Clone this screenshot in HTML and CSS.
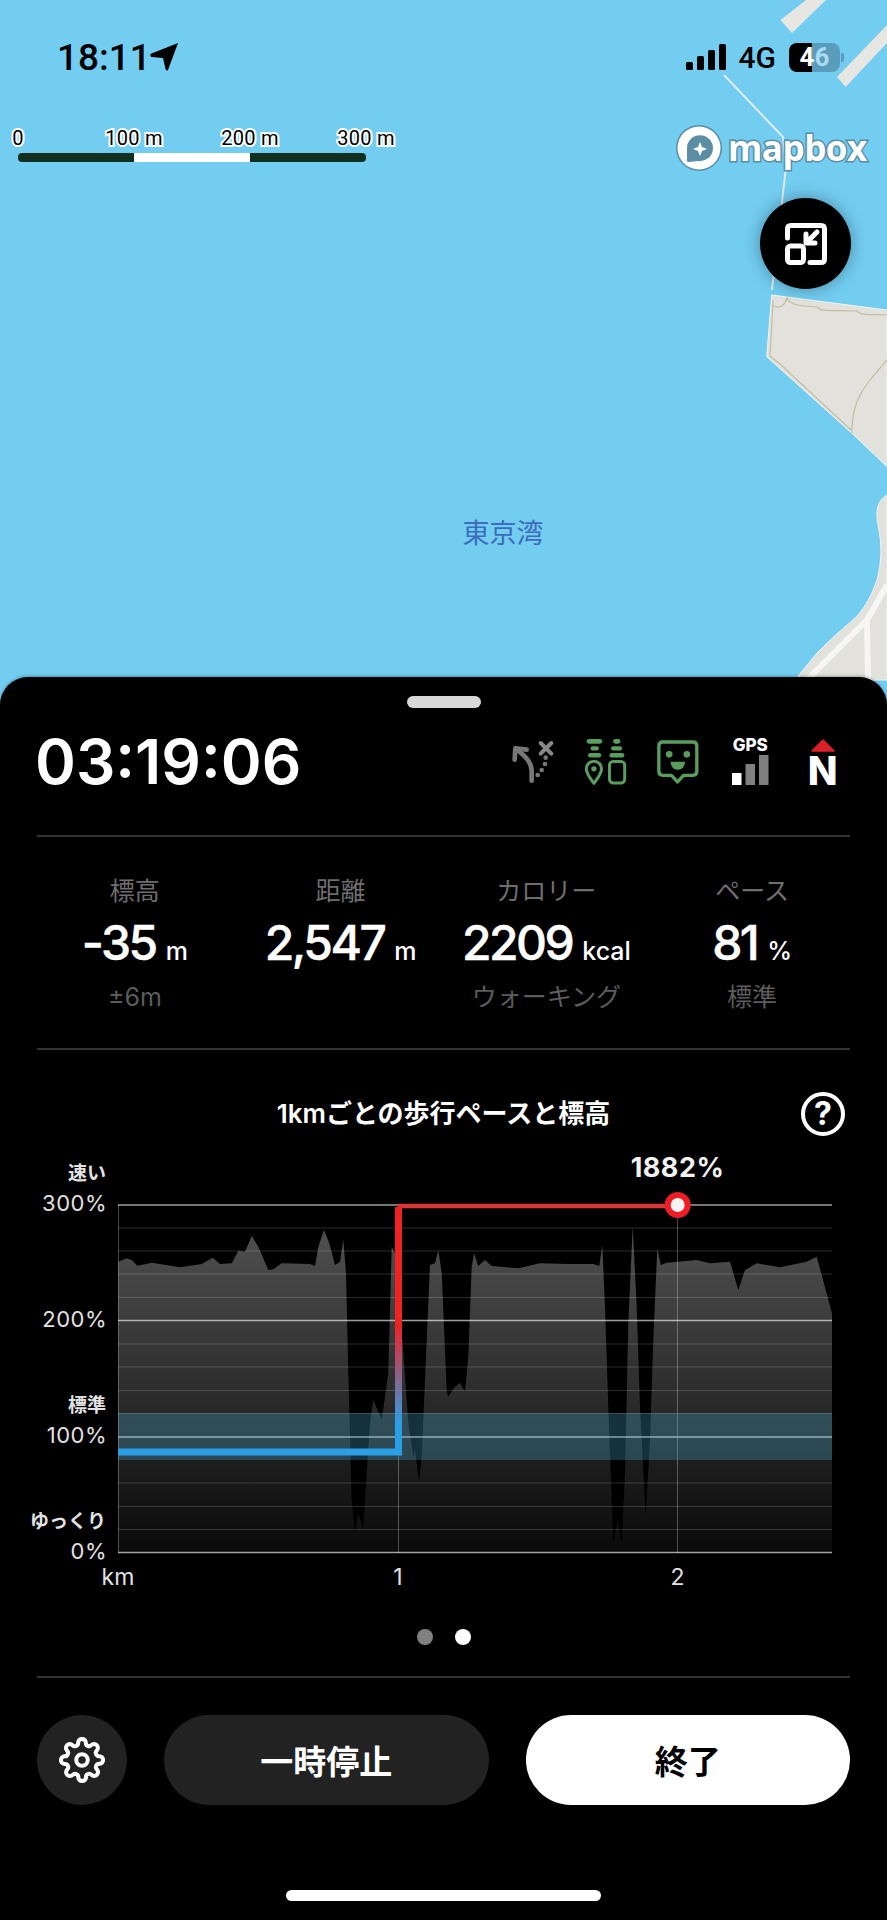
FILE: index.html
```html
<!DOCTYPE html>
<html lang="ja">
<head>
    <meta charset="UTF-8">
    <meta name="viewport" content="width=device-width, initial-scale=1.0">
    <title>ウォーキング</title>
    <link rel="stylesheet" href="styles.css">
</head>
<body>
    <div class="map">
        <svg class="map-canvas" viewBox="0 0 887 707" width="887" height="707">
            <polygon class="pier" points="780.5,20 792,33 826,0 806,0"/>
            <polygon class="pier" points="837,77 845.6,87 887,43 887,25"/>
            <polyline class="cable" points="724,75 783,137 786,167 772,290"/>
            <polygon class="land" points="771.7,295 887,310 887,466.7 851.7,433 766.7,356.7"/>
            <path class="land-road" d="M772 305 C780 310 785 305 787 298 C790 305 800 306 817 307 C822 312 830 310 857 311 C860 316 870 314 887 315"/>
            <path class="land-road" d="M773 300 L772 320 L770 356 L780 364 L851 430"/>
            <path class="land-road" d="M887 360 C865 385 851 400 852 433"/>
            <path class="land" d="M887 495 C878 500 875 510 878 525 C882 545 882 560 877 580 C870 600 862 612 853 620 C835 635 825 645 817 653 L795 680 L887 680 Z"/>
            <path class="map-road" d="M807 680 L867 620 L887 585"/>
            <path class="map-road" d="M867 620 L868 680"/>
        </svg>

        <div class="status-bar">
            <div class="status-time">
                <span>18:11</span>
                <svg viewBox="0 0 28 28" width="28" height="28"><path d="M28 0 L18 27 Q16.500 28.500 15.500 26 L13 15 L1.500 14 Q-1 12 1.500 10.500 Z"/></svg>
            </div>
            <div class="status-right">
                <svg viewBox="0 0 40 26" width="40" height="26"><rect x="0" y="18" width="7" height="8" rx="1.500"/><rect x="11" y="12" width="7" height="14" rx="1.500"/><rect x="22" y="6" width="7" height="20" rx="1.500"/><rect x="33" y="0" width="7" height="26" rx="1.500"/></svg>
                <span class="status-net">4G</span>
                <div class="battery"><span>4</span><span class="battery-dim">6</span></div>
            </div>
        </div>

        <div class="scale">
            <div class="scale-labels">
                <span>0</span><span>100 m</span><span>200 m</span><span>300 m</span>
            </div>
            <div class="scale-bar">
                <div class="scale-seg"></div>
                <div class="scale-seg light"></div>
                <div class="scale-seg"></div>
            </div>
        </div>

        <div class="mapbox">
            <svg viewBox="0 0 46 46" width="46" height="46">
                <circle cx="23" cy="23" r="21.500" fill="#fff" stroke="#5b8ea5" stroke-width="3"/>
                <path d="M11 24 A13 13 0 1 1 22 36 L13 37 Q10 37 11 34 Z" fill="#5b8ea5"/>
                <path d="M24 17 L26 22 L31 24 L26 26 L24 31 L22 26 L17 24 L22 22 Z" fill="#fff"/>
            </svg>
            <span>mapbox</span>
        </div>

        <button class="shrink-btn">
            <svg viewBox="0 0 42 42" width="42" height="42" fill="none" stroke="#fff" stroke-width="5" stroke-linecap="round" stroke-linejoin="round">
                <path d="M2.500 15 V6 Q2.500 2.500 6 2.500 H36 Q39.500 2.500 39.500 6 V36 Q39.500 39.500 36 39.500 H25"/>
                <rect x="2.500" y="23" width="16" height="16.500" rx="3"/>
                <path d="M32 9 L22 19 M21 11 V20 H30"/>
            </svg>
        </button>

        <div class="place-name">東京湾</div>
    </div>

    <div class="sheet">
        <div class="handle"></div>

        <div class="top-row">
            <div class="timer">03:19:06</div>
            <div class="top-icons">
                <svg viewBox="60 90 135 135" width="45" height="45">
                    <path d="M125 215 V185 Q125 155 84 125" fill="none" stroke="#777" stroke-width="14" stroke-linecap="round"/>
                    <path d="M74 152 L76 118 L110 122" fill="none" stroke="#777" stroke-width="14" stroke-linecap="round" stroke-linejoin="round"/>
                    <circle cx="143" cy="198" r="7" fill="#777"/><circle cx="155" cy="183" r="7" fill="#777"/><circle cx="165" cy="165" r="7" fill="#777"/><circle cx="167" cy="146" r="7" fill="#777"/>
                    <path d="M152 102 L184 134 M184 102 L152 134" stroke="#888" stroke-width="12" stroke-linecap="round"/>
                </svg>
                <svg viewBox="280 85 130 140" width="43" height="47">
                    <rect x="288" y="87" width="47" height="14" rx="7" fill="#5a9e5e"/><rect x="300" y="109" width="25" height="13" rx="6" fill="#5a9e5e"/><rect x="292" y="129" width="40" height="14" rx="7" fill="#5a9e5e"/>
                    <rect x="368" y="87" width="22" height="14" rx="7" fill="#5a9e5e"/><rect x="362" y="109" width="33" height="13" rx="6" fill="#5a9e5e"/><rect x="357" y="129" width="45" height="14" rx="7" fill="#5a9e5e"/>
                    <path d="M310 221 C298 205 287 192 287 177 A23 23 0 0 1 333 177 C333 192 322 205 310 221 Z" fill="none" stroke="#5a9e5e" stroke-width="9" stroke-linejoin="round"/>
                    <circle cx="310" cy="177" r="8" fill="#5a9e5e"/>
                    <rect x="357" y="155" width="46" height="65" rx="11" fill="none" stroke="#5a9e5e" stroke-width="9"/>
                </svg>
                <svg viewBox="498 92 128 132" width="43" height="44">
                    <path d="M518 98 H608 Q620 98 620 110 V186 Q620 198 608 198 H580 L562 218 L544 198 H518 Q506 198 506 186 V110 Q506 98 518 98 Z" fill="none" stroke="#5a9e5e" stroke-width="10" stroke-linejoin="round"/>
                    <circle cx="537" cy="135" r="10" fill="#5a9e5e"/><circle cx="590" cy="135" r="10" fill="#5a9e5e"/>
                    <path d="M541 157 H585 Q583 181 563 181 Q543 181 541 157 Z" fill="#5a9e5e"/>
                </svg>
                <div class="gps-icon">
                    <span>GPS</span>
                    <svg viewBox="0 0 37 30" width="37" height="30">
                        <rect x="0" y="18" width="9.500" height="12" fill="#fff"/><rect x="13.500" y="9" width="9.500" height="21" fill="#808080"/><rect x="27" y="0" width="9.500" height="30" fill="#808080"/>
                    </svg>
                </div>
                <div class="north-icon">
                    <svg viewBox="0 0 24 13" width="24" height="13"><path d="M12 1 L23 12 H1 Z" fill="#dc2027" stroke="#dc2027" stroke-width="1.500" stroke-linejoin="round"/></svg>
                    <span>N</span>
                </div>
            </div>
        </div>

        <div class="stats">
            <div class="stat">
                <div class="stat-label">標高</div>
                <div class="stat-value">-35<span class="unit">m</span></div>
                <div class="stat-sub">±6m</div>
            </div>
            <div class="stat">
                <div class="stat-label">距離</div>
                <div class="stat-value">2,547<span class="unit">m</span></div>
                <div class="stat-sub"></div>
            </div>
            <div class="stat">
                <div class="stat-label">カロリー</div>
                <div class="stat-value">2209<span class="unit">kcal</span></div>
                <div class="stat-sub">ウォーキング</div>
            </div>
            <div class="stat">
                <div class="stat-label">ペース</div>
                <div class="stat-value">81<span class="unit">%</span></div>
                <div class="stat-sub">標準</div>
            </div>
        </div>

        <div class="chart-section">
            <div class="chart-head">
                <div class="chart-title">1kmごとの歩行ペースと標高</div>
                <div class="help">?</div>
            </div>

            <svg class="chart" viewBox="0 1140 887 460" width="887" height="460">
                <defs>
                    <linearGradient id="areaFill" x1="0" y1="1226" x2="0" y2="1553" gradientUnits="userSpaceOnUse">
                        <stop offset="0" stop-color="#505050"/>
                        <stop offset="1" stop-color="#0a0a0a"/>
                    </linearGradient>
                    <linearGradient id="paceLine" x1="0" y1="1325" x2="0" y2="1425" gradientUnits="userSpaceOnUse">
                        <stop offset="0" stop-color="#ee2227"/>
                        <stop offset="1" stop-color="#2b9fe6"/>
                    </linearGradient>
                </defs>

                <polygon fill="url(#areaFill)" points="118,1553 118.3,1261.700 126.700,1258.300 131.700,1260 137.300,1265.700 151.700,1262.700 180,1267.300 201.700,1264 212.700,1257.700 220,1264 231.700,1263.300 238.300,1251 245,1251.700 251.700,1236 258.300,1246.700 268.300,1270 273.300,1269.300 281.700,1263.300 310,1264 315,1266 318.300,1246.700 324,1230 329.300,1243.300 335,1265 340,1261.700 343.300,1240 346,1273.300 348.300,1373.300 351.700,1500 355,1533.300 358.300,1513.300 363.300,1528.300 366.700,1473.300 370,1423.300 373.300,1400 381.700,1420 388.300,1373.300 391.700,1246.700 395,1253 400,1306.700 408.300,1423 413.300,1456.700 415,1450 419,1481.700 421.700,1456.700 426.700,1340 430,1265 435,1263.300 438.300,1250 441.700,1273 446.700,1390 448,1396.700 455,1386.700 460,1383 465,1391.700 468.300,1356.700 471.700,1266.700 474,1253.300 478.300,1266 485,1260 491.700,1266 518.300,1268.300 540,1263.300 566.700,1264 593.300,1264 599.300,1266 602.300,1245 605,1306.700 608.300,1406.700 613.300,1543.300 617.700,1520 621.700,1543.300 625,1473.300 628.300,1323.300 632.700,1226.700 636.700,1306.700 640,1406.700 645.700,1516.700 650,1440 653.300,1340 657.300,1248.300 660.700,1265 666.700,1262.700 696.700,1260 710,1263.300 730,1261.700 738.300,1290 745,1270 756.700,1263.300 780,1267.300 806.700,1261.700 816.700,1256.700 832,1313.300 832,1553"/>

                <g class="grid-minor">
                    <line x1="118" x2="832" y1="1228" y2="1228"/><line x1="118" x2="832" y1="1251" y2="1251"/><line x1="118" x2="832" y1="1274" y2="1274"/><line x1="118" x2="832" y1="1297.500" y2="1297.500"/>
                    <line x1="118" x2="832" y1="1344" y2="1344"/><line x1="118" x2="832" y1="1367" y2="1367"/><line x1="118" x2="832" y1="1390.500" y2="1390.500"/><line x1="118" x2="832" y1="1413.500" y2="1413.500"/>
                    <line x1="118" x2="832" y1="1483" y2="1483"/><line x1="118" x2="832" y1="1506.500" y2="1506.500"/><line x1="118" x2="832" y1="1529.500" y2="1529.500"/>
                </g>
                <g class="grid-major">
                    <line x1="118" x2="832" y1="1205" y2="1205"/><line x1="118" x2="832" y1="1320.500" y2="1320.500"/><line x1="118" x2="832" y1="1437" y2="1437"/><line x1="118" x2="832" y1="1552.500" y2="1552.500"/>
                </g>
                <g class="grid-vert">
                    <line x1="118.500" x2="118.500" y1="1205" y2="1553"/><line x1="398.500" x2="398.500" y1="1205" y2="1553"/><line x1="677.500" x2="677.500" y1="1205" y2="1553"/>
                </g>

                <rect class="band" x="118" y="1413" width="714" height="47"/>

                <path class="line-top" d="M398 1206 H678"/>
                <path class="line-pace" d="M118 1452 H398.500 V1207"/>
                <circle class="dot-ring" cx="677.700" cy="1205" r="13"/>
                <circle class="dot-core" cx="677.700" cy="1205" r="7"/>

                <text class="axis-hint" x="106" y="1180">速い</text>
                <text class="axis-pct" x="107" y="1211">300%</text>
                <text class="axis-pct" x="107" y="1327">200%</text>
                <text class="axis-hint" x="106" y="1412">標準</text>
                <text class="axis-pct" x="107" y="1443">100%</text>
                <text class="axis-hint" x="106" y="1528">ゆっくり</text>
                <text class="axis-pct" x="107" y="1559">0%</text>
                <text class="axis-km" x="118" y="1585">km</text>
                <text class="axis-km" x="398" y="1585">1</text>
                <text class="axis-km" x="677.500" y="1585">2</text>
                <text class="peak" x="677.500" y="1177">1882%</text>
            </svg>

            <div class="pager">
                <span class="pager-dot"></span>
                <span class="pager-dot on"></span>
            </div>
        </div>

        <div class="actions">
            <button class="gear-btn">
                <svg viewBox="0 0 24 24" width="46" height="46" fill="none" stroke="#fff" stroke-width="2.100" stroke-linejoin="round">
                    <circle cx="12" cy="12" r="3"/>
                    <path d="M19.4 15a1.65 1.65 0 0 0 .33 1.82l.06.06a2 2 0 0 1 0 2.83 2 2 0 0 1-2.83 0l-.06-.06a1.65 1.65 0 0 0-1.82-.33 1.65 1.65 0 0 0-1 1.51V21a2 2 0 0 1-2 2 2 2 0 0 1-2-2v-.09A1.65 1.65 0 0 0 9 19.4a1.65 1.65 0 0 0-1.82.33l-.06.06a2 2 0 0 1-2.83 0 2 2 0 0 1 0-2.83l.06-.06a1.65 1.65 0 0 0 .33-1.82 1.65 1.65 0 0 0-1.51-1H3a2 2 0 0 1-2-2 2 2 0 0 1 2-2h.09A1.65 1.65 0 0 0 4.6 9a1.65 1.65 0 0 0-.33-1.82l-.06-.06a2 2 0 0 1 0-2.83 2 2 0 0 1 2.83 0l.06.06a1.65 1.65 0 0 0 1.82.33H9a1.65 1.65 0 0 0 1-1.51V3a2 2 0 0 1 2-2 2 2 0 0 1 2 2v.09a1.65 1.65 0 0 0 1 1.51 1.65 1.65 0 0 0 1.82-.33l.06-.06a2 2 0 0 1 2.83 0 2 2 0 0 1 0 2.83l-.06.06a1.65 1.65 0 0 0-.33 1.82V9a1.65 1.65 0 0 0 1.51 1H21a2 2 0 0 1 2 2 2 2 0 0 1-2 2h-.09a1.65 1.65 0 0 0-1.51 1z"/>
                </svg>
            </button>
            <button class="action-btn pause">一時停止</button>
            <button class="action-btn finish">終了</button>
        </div>

        <div class="home-bar"></div>
    </div>
</body>
</html>
```
FILE: styles.css
```css
* {
    box-sizing: border-box;
}
body {
    margin: 0;
    width: 887px;
    height: 1920px;
    overflow: hidden;
    background-color: #000;
    font-family: Inter, "Noto Sans CJK JP", sans-serif;
    color: #fff;
}
button {
    border: none;
    padding: 0;
    font-family: inherit;
}

/* map */
.map {
    position: relative;
    height: 707px;
    background-color: #72cdf1;
}
.map-canvas {
    position: absolute;
    top: 0;
    left: 0;
}
.land {
    fill: #e2e1dc;
    stroke: #eef3f2;
    stroke-width: 1;
}
.land-road {
    fill: none;
    stroke: #c4bea0;
    stroke-width: 1.2;
}
.map-road {
    fill: none;
    stroke: #f6f6f6;
    stroke-width: 6;
}
.pier {
    fill: #e6e6e2;
}
.cable {
    fill: none;
    stroke: #dfeaf2;
    stroke-width: 2;
}
.status-bar {
    position: relative;
    height: 114px;
    padding: 0 47px 0 57px;
    display: flex;
    align-items: center;
    justify-content: space-between;
    color: #000;
}
.status-time {
    display: flex;
    align-items: center;
    gap: 0;
    font-family: Roboto, sans-serif;
    font-size: 37px;
    font-weight: 500;
}
.status-time svg {
    margin-left: -1px;
}
.status-right {
    display: flex;
    align-items: center;
    gap: 13px;
}
.status-net {
    font-family: Roboto, sans-serif;
    font-size: 30px;
    font-weight: 500;
}
.battery {
    position: relative;
    width: 51px;
    height: 29px;
    border-radius: 8px;
    background: linear-gradient(90deg, #000 45%, #5a9cbc 45%);
    color: #fff;
    font-family: Roboto, sans-serif;
    font-size: 26px;
    font-weight: 700;
    line-height: 29px;
    text-align: center;
}
.battery::after {
    content: "";
    position: absolute;
    left: 52px;
    top: 10px;
    width: 3px;
    height: 9px;
    border-radius: 0 2px 2px 0;
    background-color: #5a9cbc;
}
.battery-dim {
    color: #a9dcf2;
}
.scale {
    position: absolute;
    left: 18px;
    top: 128px;
    width: 348px;
}
.scale-labels {
    display: flex;
    justify-content: space-between;
    height: 21px;
    margin-bottom: 4px;
}
.scale-labels span {
    width: 0;
    display: flex;
    justify-content: center;
    white-space: nowrap;
    font-family: Roboto, sans-serif;
    font-size: 20px;
    line-height: 21px;
    letter-spacing: 0.3px;
    color: #000;
    -webkit-text-stroke: 4px #fff;
    paint-order: stroke fill;
}
.scale-bar {
    display: flex;
    height: 9px;
    border-radius: 4px;
    overflow: hidden;
}
.scale-seg {
    flex: 1;
    background-color: #12301f;
}
.scale-seg.light {
    background-color: #fff;
}
.mapbox {
    position: absolute;
    left: 676px;
    top: 125px;
    display: flex;
    align-items: center;
    gap: 6px;
    font-family: "Open Sans", sans-serif;
    font-size: 35px;
    font-weight: 700;
    line-height: 46px;
    letter-spacing: -0.5px;
    color: #fff;
    -webkit-text-stroke: 3px #5b8ea5;
    paint-order: stroke fill;
}
.shrink-btn {
    position: absolute;
    left: 760px;
    top: 198px;
    width: 91px;
    height: 91px;
    border-radius: 50%;
    background-color: #000;
    box-shadow: 0 0 16px rgba(0, 0, 0, 0.35);
    display: flex;
    align-items: center;
    justify-content: center;
}
.place-name {
    position: absolute;
    left: 443px;
    top: 515px;
    width: 120px;
    text-align: center;
    font-size: 27px;
    line-height: 38px;
    color: #3c6cbc;
}

/* bottom sheet */
.sheet {
    position: relative;
    margin-top: -30px;
    height: 1243px;
    padding: 19px 37px 0;
    background-color: #000;
    border-radius: 28px 28px 0 0;
    box-shadow: 0 -1px 3px rgba(0, 0, 0, 0.3);
}
.handle {
    width: 74px;
    height: 12px;
    margin: 0 auto;
    border-radius: 6px;
    background-color: #d8d8d8;
}
.top-row {
    height: 129px;
    padding-bottom: 20px;
    display: flex;
    align-items: center;
    justify-content: space-between;
    border-bottom: 2px solid #333;
}
.timer {
    margin-left: -2px;
    font-size: 62px;
    font-weight: 600;
    line-height: 70px;
}
.top-icons {
    display: grid;
    grid-template-columns: repeat(5, 72.5px);
    align-items: center;
    justify-items: center;
    margin-right: -9px;
}
.gps-icon {
    display: flex;
    flex-direction: column;
    align-items: center;
    gap: 3px;
}
.gps-icon span {
    font-size: 17px;
    font-weight: 800;
    line-height: 14px;
}
.north-icon {
    display: flex;
    flex-direction: column;
    align-items: center;
    gap: 4px;
}
.north-icon span {
    font-size: 39px;
    font-weight: 800;
    line-height: 29px;
}

/* stats */
.stats {
    height: 213px;
    margin: 0 -5px;
    padding-top: 37px;
    display: grid;
    grid-template-columns: repeat(4, 1fr);
    position: relative;
}
.stats::after {
    content: "";
    position: absolute;
    left: 5px;
    right: 5px;
    bottom: 0;
    height: 2px;
    background-color: #333;
}
.stat {
    text-align: center;
}
.stat-label {
    font-size: 25px;
    line-height: 34px;
    color: #6e6e6e;
}
.stat-value {
    margin-top: 10px;
    font-size: 48px;
    font-weight: 500;
    line-height: 50px;
    letter-spacing: -2.5px;
    -webkit-text-stroke: 0.5px #fff;
}
.unit {
    margin-left: 10px;
    font-size: 25px;
    font-weight: 500;
    letter-spacing: 0;
    -webkit-text-stroke: 0;
}
.stat-sub {
    margin-top: 4px;
    min-height: 34px;
    font-size: 25px;
    line-height: 34px;
    color: #5c5c5c;
}

/* chart */
.chart-section {
    height: 628px;
    padding-top: 40px;
    border-bottom: 2px solid #333;
}
.chart-head {
    height: 48px;
    margin-bottom: 2px;
    display: grid;
    grid-template-columns: 1fr auto 1fr;
    align-items: center;
}
.chart-title {
    grid-column: 2;
    font-size: 26px;
    font-weight: 600;
    line-height: 48px;
    white-space: nowrap;
}
.help {
    grid-column: 3;
    justify-self: end;
    width: 44px;
    height: 44px;
    margin-right: 5px;
    border: 4px solid #fff;
    border-radius: 50%;
    font-size: 32px;
    font-weight: 700;
    line-height: 36px;
    text-align: center;
}
.chart {
    display: block;
    margin: 0 -37px;
}
.grid-minor line {
    stroke: #fff;
    stroke-opacity: 0.17;
    stroke-width: 1;
}
.grid-major line {
    stroke: #fff;
    stroke-opacity: 0.62;
    stroke-width: 1.5;
}
.grid-vert line {
    stroke: #fff;
    stroke-opacity: 0.28;
    stroke-width: 1;
}
.band {
    fill: #4cb4dc;
    fill-opacity: 0.27;
}
.line-top {
    fill: none;
    stroke: #d93636;
    stroke-width: 4.5;
}
.line-pace {
    fill: none;
    stroke: url(#paceLine);
    stroke-width: 7;
}
.dot-ring {
    fill: #ee1c25;
}
.dot-core {
    fill: #f4f4f4;
}
.axis-pct,
.axis-hint {
    text-anchor: end;
    fill: #e2e2e2;
}
.axis-pct {
    font-size: 22px;
    letter-spacing: 0.5px;
}
.axis-hint {
    font-size: 19px;
    font-weight: 700;
}
.axis-km {
    font-size: 23px;
    fill: #e2e2e2;
    text-anchor: middle;
}
.peak {
    font-size: 27px;
    font-weight: 700;
    fill: #f2f2f2;
    text-anchor: middle;
    letter-spacing: 0.5px;
}
.pager {
    margin-top: 29px;
    display: flex;
    justify-content: center;
    gap: 22px;
}
.pager-dot {
    width: 16px;
    height: 16px;
    border-radius: 50%;
    background-color: #808080;
}
.pager-dot.on {
    background-color: #fff;
}

/* bottom buttons */
.actions {
    margin-top: 37px;
    display: flex;
    gap: 37px;
}
.gear-btn {
    width: 90px;
    height: 90px;
    flex-shrink: 0;
    border-radius: 50%;
    background-color: #222;
    display: flex;
    align-items: center;
    justify-content: center;
}
.action-btn {
    flex: 1;
    height: 90px;
    border-radius: 45px;
    font-size: 33px;
    font-weight: 700;
}
.pause {
    background-color: #222;
    color: #fff;
}
.finish {
    background-color: #fff;
    color: #000;
}
.home-bar {
    width: 315px;
    height: 11px;
    margin: 85px auto 0;
    border-radius: 6px;
    background-color: #fff;
}
```
